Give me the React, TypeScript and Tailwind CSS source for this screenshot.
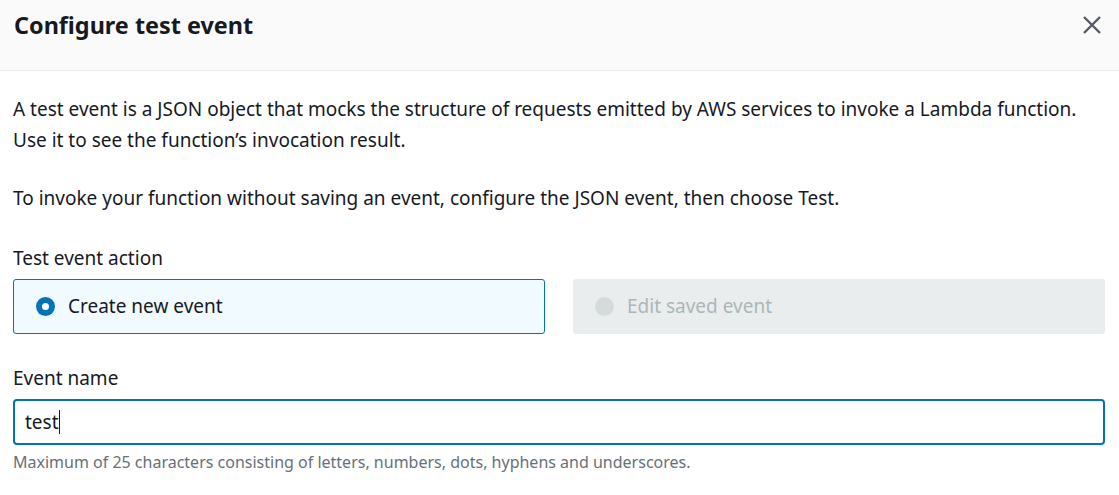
export default function App() {
  return (
    <div className="w-[1119px] h-[495px] bg-white text-[#16191f] font-['Noto_Sans',sans-serif] overflow-hidden">
      {/* Header */}
      <div className="h-[71px] bg-[#fafafa] border-b border-[#eaeded] flex items-start justify-between pl-[14px] pr-[17px] pt-[8px]">
        <h1 className="text-[23.4px] leading-[34px] font-bold text-[#16191f]">Configure test event</h1>
        <button className="mt-[7px] text-[#545b64]" title="Close">
          <svg width="20" height="20" viewBox="0 0 20 20" fill="none" stroke="currentColor" strokeWidth="2.4">
            <path d="M2 2 L18 18 M18 2 L2 18" />
          </svg>
        </button>
      </div>

      {/* Body */}
      <div className="pl-[13px] pr-[14px] pt-[23px] text-[19px]">
        <p className="leading-[31px]">
          A test event is a JSON object that mocks the structure of requests emitted by AWS services to invoke a Lambda function.
          <br />
          Use it to see the function’s invocation result.
        </p>
        <p className="leading-[31px] mt-[27px]">
          To invoke your function without saving an event, configure the JSON event, then choose Test.
        </p>

        <div className="mt-[32px] leading-[24px]">Test event action</div>
        <div className="mt-[9px] grid grid-cols-2 gap-[28px]">
          <label className="h-[55px] flex items-center gap-[13px] px-[22px] bg-[#f1faff] border border-[#0073bb] rounded-[3px]">
            <span className="w-[19px] h-[19px] rounded-full bg-[#0073bb] flex items-center justify-center">
              <span className="w-[7px] h-[7px] rounded-full bg-white" />
            </span>
            <span>Create new event</span>
          </label>
          <label className="h-[55px] flex items-center gap-[13px] px-[22px] bg-[#eaeded] rounded-[3px] text-[#aab7b8]">
            <span className="w-[19px] h-[19px] rounded-full bg-[#d5dbdb]" />
            <span>Edit saved event</span>
          </label>
        </div>

        <div className="mt-[32px] leading-[24px]">Event name</div>
        <div className="mt-[9px] h-[46px] border-2 border-[#0073bb] rounded-[4px] flex items-center px-[10px]">
          <span>test</span>
          <span className="w-px h-[24px] bg-[#16191f]" />
        </div>
        <div className="mt-[6px] text-[16px] leading-[22px] text-[#687078]">
          Maximum of 25 characters consisting of letters, numbers, dots, hyphens and underscores.
        </div>
      </div>
    </div>
  );
}
